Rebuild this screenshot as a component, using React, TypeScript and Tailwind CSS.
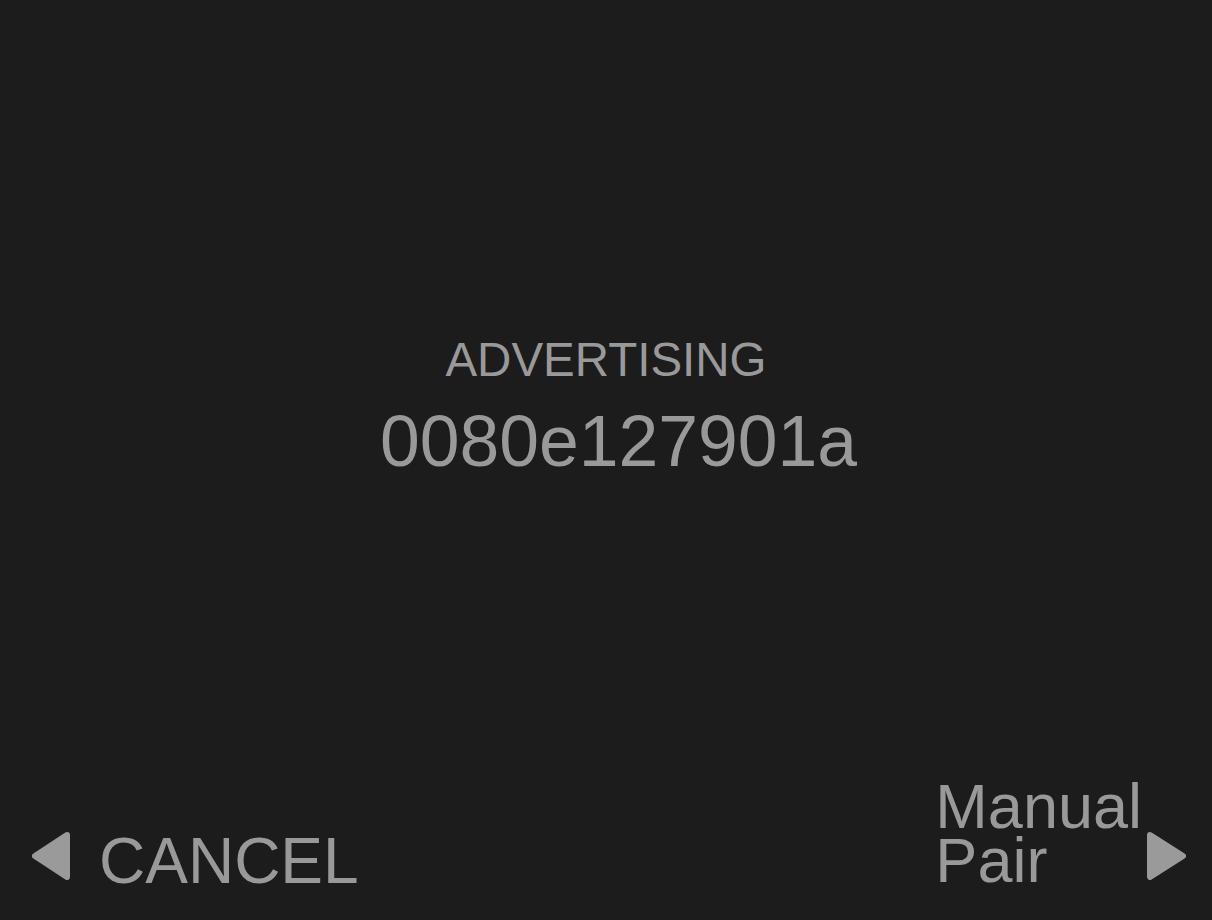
export default function App() {
  return (
    <div className="h-[920px] w-full bg-[#1c1c1c] text-[#999999] flex flex-col font-['Liberation_Sans',Arial,sans-serif] overflow-hidden">
      {/* status block */}
      <div className="flex-1 flex flex-col items-center pt-[336px]">
        <div className="text-[47.5px] leading-[48px]">ADVERTISING</div>
        <div className="mt-[21px] pl-[25px] text-[71.5px] leading-[72px]">0080e127901a</div>
      </div>

      {/* bottom actions */}
      <div className="flex items-end justify-between pl-[32px] pr-[26px] pb-[27px]">
        <button className="flex items-end gap-[29px] text-[64px] leading-[64px]">
          <svg width="38" height="48" viewBox="0 0 38 48" className="mb-[13px]">
            <polygon points="35,3 3,24 35,45" fill="#9a9a9a" stroke="#9a9a9a" strokeWidth="6" strokeLinejoin="round" />
          </svg>
          <span>CANCEL</span>
        </button>
        <button className="flex items-end gap-[5px] text-[63px] leading-[54px]">
          <span className="text-left mb-[6px]">
            Manual
            <br />
            Pair
          </span>
          <svg width="39" height="48" viewBox="0 0 39 48" className="mb-[13px]">
            <polygon points="3,3 36,24 3,45" fill="#9a9a9a" stroke="#9a9a9a" strokeWidth="6" strokeLinejoin="round" />
          </svg>
        </button>
      </div>
    </div>
  );
}
